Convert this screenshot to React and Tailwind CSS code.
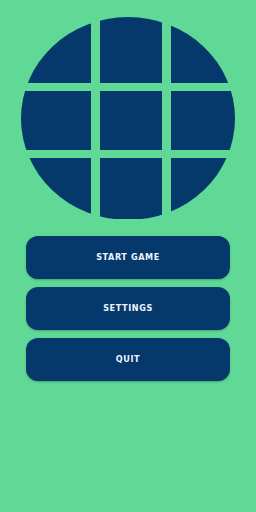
import React from "react";

export default function App() {
  const cells = Array.from({ length: 9 });
  return (
    <div className="w-[256px] h-[512px] bg-[#5fd995] flex flex-col items-center pt-[17px]" style={{ fontFamily: '"DejaVu Sans Condensed", "Liberation Sans", sans-serif' }}>
      <div className="w-[214px] h-[203px] rounded-[50%] overflow-hidden grid grid-cols-[70px_62px_64px] grid-rows-[66px_59px_61px] gap-x-[9px] gap-y-[8px] bg-[#5fd995]">
        {cells.map((_, i) => (
          <div key={i} className="bg-[#05386b]" />
        ))}
      </div>
      <div className="mt-[16px] w-[204px] flex flex-col gap-[8px]">
        {["START GAME", "SETTINGS", "QUIT"].map((t) => (
          <button
            key={t}
            className="h-[43px] w-full rounded-[12px] bg-[#05386b] text-[#eef4ff] text-[9px] font-bold tracking-[0.6px] pt-[1px] shadow-[0_1px_2px_rgba(0,0,0,0.25)] flex items-center justify-center"
          >
            {t}
          </button>
        ))}
      </div>
    </div>
  );
}
